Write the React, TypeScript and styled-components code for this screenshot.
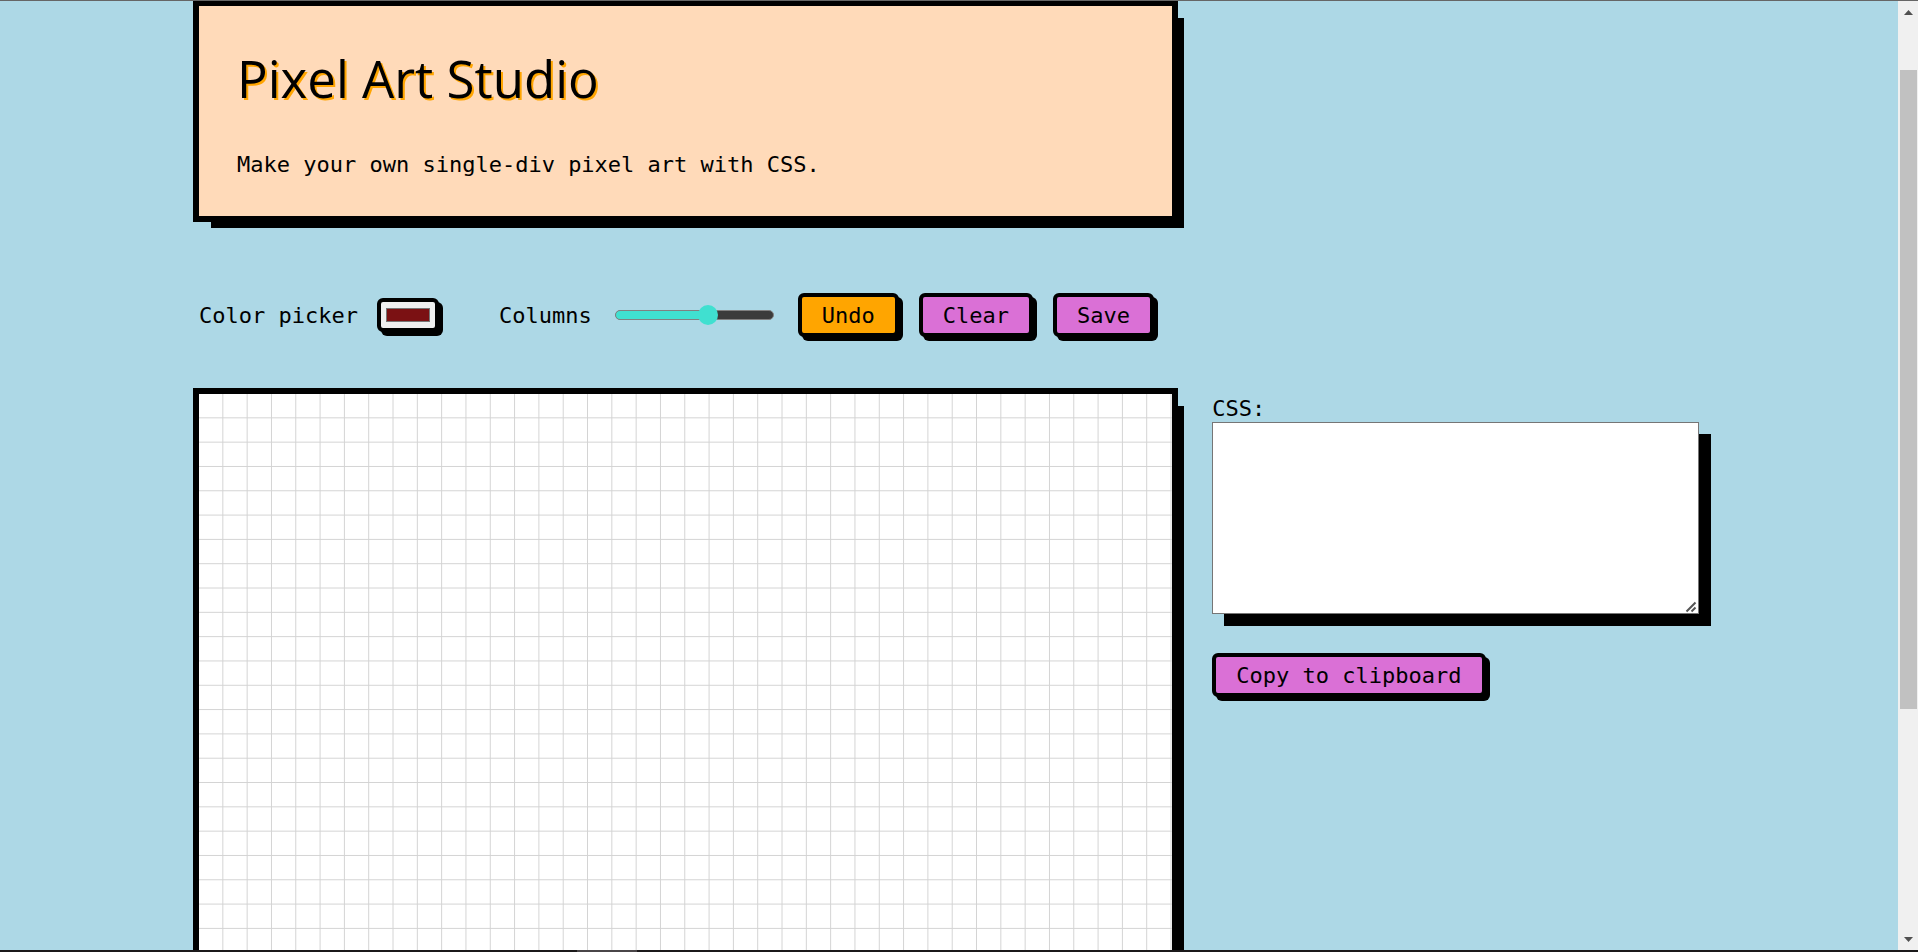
import React, { useState } from "react";
import styled, { createGlobalStyle } from "styled-components";

const GlobalStyle = createGlobalStyle`
  *, *::before, *::after { box-sizing: border-box; }
  body {
    margin: 0;
    background: lightblue;
    color: #000;
    font-family: Consolas, "DejaVu Sans Mono", "Liberation Mono", monospace;
    font-size: 22px;
    line-height: 26px;
  }
`;

const Window = styled.div`
  position: relative;
  display: grid;
  grid-template-columns: minmax(0, 1fr) 20px;
  grid-template-rows: minmax(0, 1fr) 2px;
  height: 100vh;
  overflow: hidden;
`;

const TopEdge = styled.div`
  position: absolute;
  inset: 0 0 auto;
  height: 1px;
  background: #666;
`;

const BottomEdge = styled.div`
  grid-column: 1 / -1;
  background: linear-gradient(#4a4648, #4a4648) 577px 0 / 60px 2px no-repeat #1b191a;
`;

const Page = styled.div`
  overflow: hidden;
  padding: 6px 20px 0;
`;

const Layout = styled.main`
  display: grid;
  grid-template-columns: 2fr 1fr;
  column-gap: 40px;
  align-items: start;
  max-width: 1500px;
  margin: 0 auto;
`;

const Header = styled.header`
  grid-column: 1;
  padding: 38px;
  background: peachpuff;
  box-shadow: 0 0 0 6px #000, 12px 12px 0 0 #000;
`;

const Title = styled.h1`
  margin: 0 0 38px;
  font-family: "Comic Sans MS", "Open Sans", sans-serif;
  font-size: 51px;
  font-weight: 500;
  line-height: 68px;
  text-shadow: 2px 2px orange;
`;

const Intro = styled.p`
  margin: 0;
  padding-top: 2px;
`;

const Label = styled.label`
  padding-top: 2px;
`;

const Toolbar = styled.div`
  grid-column: 1;
  display: flex;
  align-items: center;
  margin: 77px 0 57px;
`;

const Field = styled.div<{ $gap: number; $after: number }>`
  display: flex;
  align-items: center;
  gap: ${(p) => p.$gap}px;
  margin-right: ${(p) => p.$after}px;
`;

const ColorInput = styled.input`
  width: 62px;
  height: 34px;
  padding: 6px 5px;
  border: 4px solid #000;
  border-radius: 6px;
  background: #efefef;
  box-shadow: 4px 4px 0 #000;
  &::-webkit-color-swatch-wrapper { padding: 0; }
  &::-webkit-color-swatch { border: 1px solid #767676; border-radius: 0; }
`;

const Range = styled.input`
  appearance: none;
  width: 159px;
  height: 10px;
  margin: 0;
  border: 1px solid #808080;
  border-radius: 5px;
  background: linear-gradient(turquoise, turquoise) 0 0 / var(--fill) 100% no-repeat #3b3b3b;
  &::-webkit-slider-thumb {
    appearance: none;
    width: 20px;
    height: 20px;
    border-radius: 50%;
    background: turquoise;
  }
`;

const Buttons = styled.div`
  display: flex;
  gap: 20px;
`;

const Button = styled.button<{ $color?: string }>`
  height: 44px;
  padding: 2px 20px 0;
  border: 4px solid #000;
  border-radius: 6px;
  background: ${(p) => p.$color ?? "orchid"};
  box-shadow: 4px 4px 0 #000;
  color: #000;
  font: inherit;
  white-space: nowrap;
`;

const Canvas = styled.div`
  grid-column: 1;
  aspect-ratio: 1;
  background-color: #fff;
  background-image:
    linear-gradient(to left, lightgray 1px, transparent 1px),
    linear-gradient(to top, lightgray 1px, transparent 1px);
  background-size: calc(100% / var(--columns)) calc(100% / var(--columns));
  box-shadow: 0 0 0 6px #000, 12px 12px 0 0 #000;
`;

const Output = styled.aside`
  grid-column: 2;
  display: flex;
  flex-direction: column;
  align-items: flex-start;
`;

const Code = styled.textarea`
  width: 100%;
  height: 192px;
  margin-bottom: 39px;
  border: 1px solid #767676;
  border-radius: 0;
  background: #fff;
  box-shadow: 12px 12px 0 #000;
  font: inherit;
  &::-webkit-resizer {
    background: url("data:image/svg+xml,%3Csvg xmlns='http://www.w3.org/2000/svg' width='15' height='15'%3E%3Cpath d='M3.500 13.500l9-9M8.500 13.500l4-4' stroke='%23555' stroke-width='2'/%3E%3C/svg%3E") right bottom no-repeat;
  }
`;

const Scrollbar = styled.div`
  display: flex;
  flex-direction: column;
  align-items: center;
  padding: 10px 1px 8px 2px;
  background: #f0f0f0;
`;

const Arrow = styled.svg`
  flex: none;
  width: 9px;
  height: 5px;
  fill: #505050;
`;

const Track = styled.div`
  flex: 1;
  display: grid;
  grid-template-rows: 55fr 639fr 228fr;
  width: 100%;
`;

const Thumb = styled.div`
  grid-row: 2;
  background: #c1c1c1;
`;

const MIN = 10;
const MAX = 60;

export default function App() {
  const [color, setColor] = useState("#7b1113");
  const [columns, setColumns] = useState(40);
  const [css, setCss] = useState("");
  const fill = ((columns - MIN) / (MAX - MIN)) * 100;

  return (
    <>
      <GlobalStyle />
      <Window>
        <Page>
          <Layout>
            <Header>
              <Title>Pixel Art Studio</Title>
              <Intro>Make your own single-div pixel art with CSS.</Intro>
            </Header>
            <Toolbar>
              <Field $gap={19} $after={60}>
                <Label htmlFor="color">Color picker</Label>
                <ColorInput id="color" type="color" value={color} onChange={(e) => setColor(e.target.value)} />
              </Field>
              <Field $gap={23} $after={24}>
                <Label htmlFor="columns">Columns</Label>
                <Range
                  id="columns"
                  type="range"
                  min={MIN}
                  max={MAX}
                  value={columns}
                  onChange={(e) => setColumns(Number(e.target.value))}
                  style={{ "--fill": `${fill}%` } as React.CSSProperties}
                />
              </Field>
              <Buttons>
                <Button type="button" $color="orange">Undo</Button>
                <Button type="button">Clear</Button>
                <Button type="button">Save</Button>
              </Buttons>
            </Toolbar>
            <Canvas style={{ "--columns": columns } as React.CSSProperties} />
            <Output>
              <Label htmlFor="css">CSS:</Label>
              <Code id="css" value={css} onChange={(e) => setCss(e.target.value)} />
              <Button type="button">Copy to clipboard</Button>
            </Output>
          </Layout>
        </Page>
        <Scrollbar aria-hidden="true">
          <Arrow viewBox="0 0 9 5"><path d="M4.500 0 9 5H0z" /></Arrow>
          <Track><Thumb /></Track>
          <Arrow viewBox="0 0 9 5"><path d="M0 0h9L4.500 5z" /></Arrow>
        </Scrollbar>
        <BottomEdge />
        <TopEdge />
      </Window>
    </>
  );
}
